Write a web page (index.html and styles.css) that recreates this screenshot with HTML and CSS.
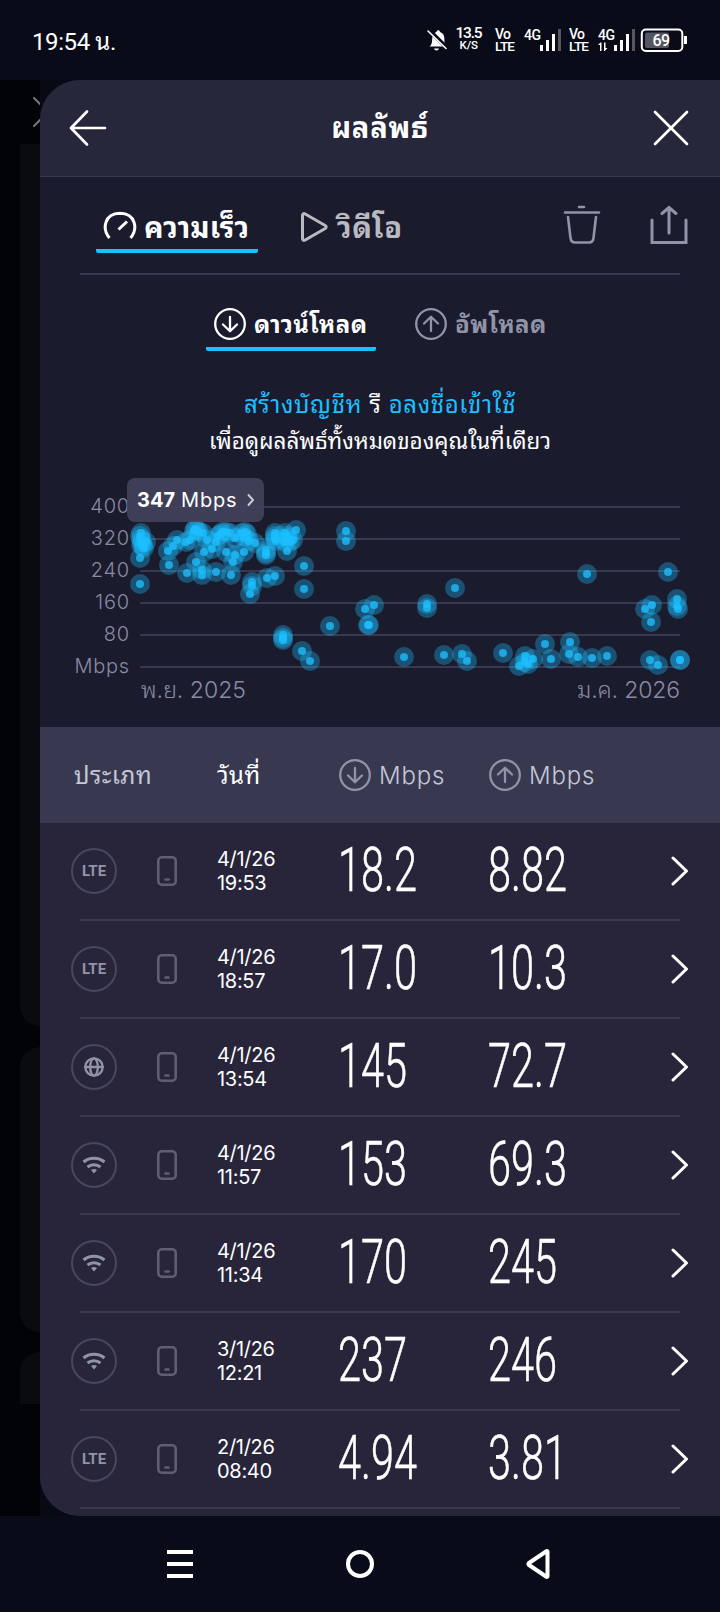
FILE: index.html
```html
<!DOCTYPE html>
<html lang="th">
<head>
    <meta charset="UTF-8">
    <meta name="viewport" content="width=device-width, initial-scale=1.0">
    <title>ผลลัพธ์</title>
    <link rel="stylesheet" href="styles.css">
</head>
<body>
    <svg class="sprite" width="0" height="0">
        <symbol id="down" viewBox="0 0 32 32">
            <circle cx="16" cy="16" r="14.8"/>
            <path d="M16 9v14M9 16.5l7 6.8 7-6.8"/>
        </symbol>
        <symbol id="up" viewBox="0 0 32 32">
            <circle cx="16" cy="16" r="14.8"/>
            <path d="M16 23V9M9 15.5l7-6.8 7 6.8"/>
        </symbol>
        <symbol id="phone" viewBox="0 0 20 30">
            <rect x="1.300" y="1.300" width="17.400" height="27.400" rx="3.5"/>
            <path d="M8.500 23.500h3"/>
        </symbol>
        <symbol id="globe" viewBox="0 0 20 20">
            <circle cx="10" cy="10" r="8.7"/>
            <ellipse cx="10" cy="10" rx="3.8" ry="8.7"/>
            <path d="M1 10h18"/>
        </symbol>
        <symbol id="wifi" viewBox="0 0 24 18">
            <path d="M1.500 6c6-5 15-5 21 0M5.500 11c3.800-3 9.200-3 13 0"/>
            <path class="fill" d="M9 14q3-1.800 6 0l-3 3.500z"/>
        </symbol>
        <symbol id="chevron" viewBox="0 0 18 30">
            <path d="M2 2l13.500 13L2 28"/>
        </symbol>
    </svg>

    <header class="status-bar">
        <span class="clock">19:54 น.</span>
        <svg class="status-icons" width="270" height="30" viewBox="425 25 270 30">
            <path class="white" d="M430.500 46.500c3-2 2.500-6 2.800-9 .3-3 2-4.800 4.200-5.500.3-2.500 3.200-2.500 3.500 0 3 1 4.200 3.300 4.300 6 .2 3.500-.2 6.500 2.200 8.500zM435 48.500h5c-.5 2.500-4.500 2.500-5 0z"/>
            <path class="slash-gap" d="M430 30l18 18"/>
            <path class="slash" d="M429 31l18 17.500"/>
            <text x="456.500" y="38" font-size="15.500" textLength="27">13.5</text>
            <text x="460.500" y="49" font-size="11.500" textLength="18.500">K/S</text>
            <text x="496" y="39" font-size="14" textLength="16">Vo</text>
            <text x="496" y="51" font-size="13.500" textLength="20">LTE</text>
            <text x="525" y="39.500" font-size="14" textLength="17">4G</text>
            <path class="white" d="M541 45h3v6h-3zM547 40h3v11h-3zM553 34h3v17h-3z"/>
            <path class="dim" d="M559 29h3v22h-3z"/>
            <text x="570" y="39" font-size="14" textLength="16">Vo</text>
            <text x="570" y="51" font-size="13.500" textLength="20">LTE</text>
            <text x="599" y="39.500" font-size="14" textLength="17">4G</text>
            <path class="white" d="M599 45l2.500-2.500h1V51H601v-6zM605 42.500h1.500V48h2L605.800 51H605z"/>
            <path class="white" d="M615 45h3v6h-3zM621 40h3v11h-3zM627 34h3v17h-3z"/>
            <path class="dim" d="M633 29h3v22h-3z"/>
            <rect class="battery" x="642.800" y="29.500" width="40.500" height="21.500" rx="4"/>
            <rect class="dim" x="646" y="32.500" width="24" height="15.500" rx="2"/>
            <path class="white" d="M685 36h3v8h-3z"/>
            <text x="653.500" y="45.500" font-size="16" textLength="17.500">69</text>
        </svg>
    </header>

    <div class="screen">
        <aside class="backdrop">
            <svg class="backdrop-close" width="8" height="32" viewBox="0 0 8 32">
                <path d="M2 2l15 15M2 30l15-15"/>
            </svg>
            <div class="ghost ghost-first"></div>
            <div class="ghost ghost-second"></div>
            <div class="ghost ghost-third"></div>
        </aside>

        <main class="drawer">
            <div class="title-bar">
                <svg class="line-icon" width="38" height="38" viewBox="0 0 38 38"><path d="M36 19H2M18 2.500L2 19l16 16.500"/></svg>
                <h1>ผลลัพธ์</h1>
                <svg class="line-icon" width="36" height="36" viewBox="0 0 36 36"><path d="M2 2l32 32M34 2L2 34"/></svg>
            </div>

            <nav class="tabs">
                <a class="tab active">
                    <svg class="gauge" width="34" height="32" viewBox="0 0 34 32"><path d="M6.500 27C-1 18 1 2.500 17 2.200 33 2.500 35 18 27.500 27"/><path class="needle" d="M24 10.500l-8.500 8"/></svg>
                    <span>ความเร็ว</span>
                </a>
                <a class="tab video">
                    <svg width="28" height="32" viewBox="0 0 28 32"><path d="M2.500 4.500c0-1.800 1.200-2.300 2.700-1.500l20 11.500c1.300.8 1.300 2.200 0 3L5.200 29c-1.500.8-2.700.2-2.700-1.500z"/></svg>
                    <span>วิดีโอ</span>
                </a>
                <svg class="tool" width="38" height="40" viewBox="0 0 38 40"><path d="M16 2h5M2 7.500h34M5 12l2.500 21c.4 3 2 4.500 4.500 4.500h14c2.500 0 4.100-1.500 4.500-4.500L33 12"/></svg>
                <svg class="tool share" width="38" height="40" viewBox="0 0 38 40"><path d="M2 15v22.500h34V15M19 28V2.500M12 8.500l7-6 7 6"/></svg>
            </nav>

            <nav class="subtabs">
                <a class="subtab active"><svg class="ring"><use href="#down"/></svg><span>ดาวน์โหลด</span></a>
                <a class="subtab"><svg class="ring"><use href="#up"/></svg><span>อัพโหลด</span></a>
            </nav>

            <div class="signin">
                <p class="signin-links"><a>สร้างบัญชีห</a> รื <a>อลงชื่อเข้าใช้</a></p>
                <p class="signin-note">เพื่อดูผลลัพธ์ทั้งหมดของคุณในที่เดียว</p>
            </div>

            <div class="chart">
                <svg width="680" height="240" viewBox="40 470 680 240">
                    <defs>
                        <marker id="dot" markerUnits="userSpaceOnUse" markerWidth="20" markerHeight="20" refX="10" refY="10">
                            <circle class="halo" cx="10" cy="10" r="10"/>
                            <circle class="core" cx="10" cy="10" r="4"/>
                        </marker>
                    </defs>
                    <path class="grid" d="M140 507h540M140 539h540M140 571h540M140 603h540M140 635h540M140 667h540"/>
                    <g class="axis">
                        <text x="130" y="513">400</text>
                        <text x="130" y="545">320</text>
                        <text x="130" y="577">240</text>
                        <text x="130" y="609">160</text>
                        <text x="130" y="641">80</text>
                        <text x="130" y="673">Mbps</text>
                    </g>
                    <text class="month" x="141" y="698" textLength="105">พ.ย. 2025</text>
                    <text class="month" x="577" y="698" textLength="103">ม.ค. 2026</text>
                    <polyline class="series" points="
                        140,584 140,558 141,533 140,536 141,539 142,542 143,546 146,542 144,548 141,545
                        168,551 169,565 173,546 177,540 186,542 187,573 190,540
                        195,529 197,530 199,532 203,533 207,540 194,531 204,552 212,549 196,562 202,570 202,575 216,572 216,542
                        221,534 222,532 218,536 226,532 230,533 235,538 226,552 235,555 233,562 231,575 244,552
                        242,533 245,532 247,534 244,537 249,541 255,543 252,582 252,586 250,594 267,578 275,576
                        266,550 266,553 266,555 275,533 275,536 275,539 276,541 285,533 287,536 288,538 290,542 293,540 285,542 287,551
                        296,530 304,566 304,589 346,531 346,541 330,626 283,635 283,638 283,640 302,651 310,661
                        365,609 374,605 368,625 369,625 404,657 427,604 427,608 455,588 444,655 462,654 467,661 503,653
                        525,656 533,659 519,666 525,662 528,664 545,644 551,659 570,642 569,654 578,657 592,658 607,656 587,574
                        668,572 645,609 652,605 651,622 677,599 677,606 678,609 650,660 658,665 680,660 680,660"/>
                </svg>
                <div class="tooltip">
                    <b>347</b><span>Mbps</span>
                    <svg width="8" height="14" viewBox="0 0 8 14"><path d="M1.500 2l4.500 5-4.500 5"/></svg>
                </div>
            </div>

            <section class="results">
                <div class="row results-head">
                    <span class="col-type">ประเภท</span>
                    <span class="col-date">วันที่</span>
                    <span class="col-speed"><svg class="ring"><use href="#down"/></svg>Mbps</span>
                    <span class="col-speed"><svg class="ring"><use href="#up"/></svg>Mbps</span>
                </div>
                <div class="row">
                    <span class="badge">LTE</span>
                    <svg class="phone"><use href="#phone"/></svg>
                    <span class="date">4/1/26<br>19:53</span>
                    <span class="value"><b>18.2</b></span>
                    <span class="value"><b>8.82</b></span>
                    <svg class="chevron"><use href="#chevron"/></svg>
                </div>
                <div class="row">
                    <span class="badge">LTE</span>
                    <svg class="phone"><use href="#phone"/></svg>
                    <span class="date">4/1/26<br>18:57</span>
                    <span class="value"><b>17.0</b></span>
                    <span class="value"><b>10.3</b></span>
                    <svg class="chevron"><use href="#chevron"/></svg>
                </div>
                <div class="row">
                    <span class="badge"><svg class="globe"><use href="#globe"/></svg></span>
                    <svg class="phone"><use href="#phone"/></svg>
                    <span class="date">4/1/26<br>13:54</span>
                    <span class="value"><b>145</b></span>
                    <span class="value"><b>72.7</b></span>
                    <svg class="chevron"><use href="#chevron"/></svg>
                </div>
                <div class="row">
                    <span class="badge"><svg class="wifi"><use href="#wifi"/></svg></span>
                    <svg class="phone"><use href="#phone"/></svg>
                    <span class="date">4/1/26<br>11:57</span>
                    <span class="value"><b>153</b></span>
                    <span class="value"><b>69.3</b></span>
                    <svg class="chevron"><use href="#chevron"/></svg>
                </div>
                <div class="row">
                    <span class="badge"><svg class="wifi"><use href="#wifi"/></svg></span>
                    <svg class="phone"><use href="#phone"/></svg>
                    <span class="date">4/1/26<br>11:34</span>
                    <span class="value"><b>170</b></span>
                    <span class="value"><b>245</b></span>
                    <svg class="chevron"><use href="#chevron"/></svg>
                </div>
                <div class="row">
                    <span class="badge"><svg class="wifi"><use href="#wifi"/></svg></span>
                    <svg class="phone"><use href="#phone"/></svg>
                    <span class="date">3/1/26<br>12:21</span>
                    <span class="value"><b>237</b></span>
                    <span class="value"><b>246</b></span>
                    <svg class="chevron"><use href="#chevron"/></svg>
                </div>
                <div class="row">
                    <span class="badge">LTE</span>
                    <svg class="phone"><use href="#phone"/></svg>
                    <span class="date">2/1/26<br>08:40</span>
                    <span class="value"><b>4.94</b></span>
                    <span class="value"><b>3.81</b></span>
                    <svg class="chevron"><use href="#chevron"/></svg>
                </div>
            </section>
        </main>
    </div>

    <footer class="nav-bar">
        <svg width="26" height="28" viewBox="0 0 26 28"><path class="white" d="M0 0h26v4H0zM0 12h26v4H0zM0 24h26v4H0z"/></svg>
        <svg width="28" height="28" viewBox="0 0 28 28"><circle cx="14" cy="14" r="12"/></svg>
        <svg width="24" height="30" viewBox="0 0 24 30"><path d="M21.500 2.500v25q-.5.800-1.500 0L3 16q-1-1 0-2L20 2.500q1-.800 1.500 0z"/></svg>
    </footer>
</body>
</html>
```

FILE: styles.css
```css
:root {
    --bar: #090b19;
    --panel: #1b1b2e;
    --header: #26273a;
    --list: #28253b;
    --line: #383950;
    --muted: #9193a8;
    --accent: #1cbfff;
}

* {
    margin: 0;
    padding: 0;
    box-sizing: border-box;
}

body {
    width: 720px;
    height: 1612px;
    overflow: hidden;
    background: var(--bar);
    color: #fff;
    font-family: Inter, "Noto Sans Thai Looped", "Droid Sans Thai", Loma, "Noto Sans Thai", "Noto Sans", sans-serif;
}

svg {
    display: block;
    flex: none;
    fill: none;
    stroke: currentColor;
    stroke-linecap: round;
    stroke-linejoin: round;
}

.sprite {
    position: absolute;
}

.white {
    fill: #fff;
    stroke: none;
}

.dim {
    fill: #55565f;
    stroke: none;
}

/* status bar */
.status-bar {
    height: 80px;
    padding: 0 26px 0 32px;
    display: flex;
    align-items: center;
    justify-content: space-between;
    font-family: Roboto, "Noto Sans Thai Looped", "Droid Sans Thai", Loma, sans-serif;
}

.clock {
    margin-top: -3px;
    font-size: 24px;
    letter-spacing: -0.4px;
}

.status-icons text {
    fill: #fff;
    stroke: none;
    font-weight: 500;
}

.slash-gap {
    stroke: var(--bar);
    stroke-width: 4;
}

.slash {
    stroke-width: 1.6;
}

.battery {
    stroke-width: 2;
}

/* page behind the drawer */
.screen {
    height: 1436px;
    display: flex;
    background: #070914;
}

.backdrop {
    width: 40px;
    padding: 16px 0 0 20px;
    overflow: hidden;
    background: #020307;
}

.backdrop-close {
    margin-left: 12px;
    color: #77777a;
    stroke-width: 2;
}

.ghost {
    background: #0a0b11;
}

.ghost-first {
    height: 882px;
    margin-top: 16px;
    border-radius: 0 0 0 20px;
}

.ghost-second {
    height: 285px;
    margin-top: 21px;
    border-radius: 20px 0 0 20px;
}

.ghost-third {
    height: 52px;
    margin-top: 20px;
    border-radius: 20px 0 0 0;
}

/* drawer */
.drawer {
    width: 680px;
    overflow: hidden;
    border-radius: 40px 0 0 40px;
    background: var(--panel);
}

.title-bar {
    height: 97px;
    padding: 0 31px 0 29px;
    display: flex;
    align-items: center;
    justify-content: space-between;
    background: var(--header);
    border-bottom: 1px solid var(--line);
}

.title-bar h1 {
    margin-top: -1px;
    font-size: 29px;
    line-height: 40px;
    letter-spacing: 0.800px;
}

.line-icon {
    stroke-width: 2.700;
}

.tabs {
    height: 98px;
    margin: 0 40px;
    padding: 20px 0 0 16px;
    display: flex;
    align-items: flex-start;
    border-bottom: 2px solid var(--line);
}

.tab,
.subtab {
    display: flex;
    align-items: center;
    font-weight: 700;
    white-space: nowrap;
}

.tab span,
.subtab span {
    margin-top: -4px;
}

.tab {
    height: 56px;
    padding-top: 7px;
    font-size: 29px;
    letter-spacing: 0.100px;
    color: #b9babf;
}

.tab svg {
    stroke-width: 3;
}

.tab.active {
    width: 162px;
    padding-left: 7px;
    color: #fff;
    border-bottom: 4px solid var(--accent);
    border-radius: 2px;
}

.tab.active svg {
    margin-right: 7px;
    stroke-width: 3;
    stroke-linecap: butt;
}

.tab.video {
    height: 52px;
    width: 106px;
    margin-left: 42px;
    letter-spacing: 0.600px;
}

.tab.video svg {
    margin-right: 9px;
}

.tool {
    margin: 8px 0 0 157px;
    color: var(--muted);
    stroke-width: 2.600;
}

.tool.share {
    margin: 8px -8px 0 auto;
    stroke-width: 3;
    stroke-linejoin: miter;
}

.subtabs {
    height: 106px;
    padding: 20px 0 0 166px;
    display: flex;
    gap: 31px;
}

.subtab {
    height: 56px;
    padding: 5px 8px 4px;
    font-size: 24px;
    letter-spacing: 0.500px;
    color: var(--muted);
}

.subtab.active {
    width: 170px;
    padding-bottom: 0;
    color: #fff;
    border-bottom: 4px solid var(--accent);
    border-radius: 2px;
}

.ring {
    width: 32px;
    height: 32px;
    margin-right: 8px;
    stroke-width: 2.300;
}

.signin {
    height: 89px;
    padding-top: 6px;
    text-align: center;
    font-size: 24px;
    line-height: 36px;
    white-space: nowrap;
}

.signin-links {
    letter-spacing: 0.600px;
}

.signin-note {
    font-size: 22.4px;
}

.signin a {
    color: var(--accent);
}

.chart {
    position: relative;
    height: 257px;
}

.grid {
    stroke: var(--line);
    stroke-width: 2;
    stroke-linecap: butt;
}

.axis text,
.month {
    fill: #8a8ba2;
    stroke: none;
    font-weight: 300;
}

.axis text {
    font-size: 20px;
    text-anchor: end;
    letter-spacing: 0.800px;
}

.month {
    font-size: 23px;
}

.series {
    stroke: none;
    marker: url(#dot);
}

.halo {
    fill: rgba(28, 191, 255, 0.33);
    stroke: none;
}

.core {
    fill: rgba(28, 191, 255, 0.78);
    stroke: none;
}

.tooltip {
    position: absolute;
    left: 87px;
    top: 8px;
    width: 137px;
    height: 44px;
    padding: 0 9px 0 10px;
    display: flex;
    align-items: center;
    gap: 6px;
    border-radius: 8px;
    background: rgba(67, 67, 92, 0.9);
    font-size: 20px;
}

.tooltip span {
    letter-spacing: 0.800px;
}

.tooltip svg {
    margin-left: auto;
    color: #c8c9d4;
    stroke-width: 2;
}

/* results list */
.results {
    height: 789px;
    overflow: hidden;
    background: var(--list);
}

.row {
    height: 98px;
    margin: 0 40px;
    display: flex;
    align-items: center;
    border-bottom: 2px solid var(--line);
}

.results-head {
    height: 96px;
    margin: 0;
    padding-left: 34px;
    border: 0;
    background: #383950;
    color: #c5c7d8;
    font-size: 24px;
}

.col-type {
    width: 143px;
    margin-top: -4px;
    letter-spacing: 0.500px;
}

.col-date {
    width: 122px;
    margin-top: -4px;
    letter-spacing: 0.500px;
    color: #fff;
}

.col-speed {
    width: 150px;
    display: flex;
    align-items: center;
    font-weight: 300;
    letter-spacing: 0.800px;
}

.col-speed .ring {
    color: var(--muted);
}

.badge {
    flex: none;
    width: 46px;
    height: 46px;
    margin-left: -9px;
    display: flex;
    align-items: center;
    justify-content: center;
    border: 2px solid #454860;
    border-radius: 50%;
    color: var(--muted);
    font: 700 15px Roboto, sans-serif;
}

.globe {
    width: 20px;
    height: 20px;
    stroke-width: 2.300;
}

.wifi {
    width: 24px;
    height: 18px;
    stroke-width: 3;
    stroke-linecap: butt;
}

.fill {
    fill: currentColor;
    stroke: none;
}

.phone {
    width: 20px;
    height: 30px;
    margin-left: 40px;
    color: #5f5e74;
    stroke-width: 2.600;
}

.date {
    width: 123px;
    margin-left: 40px;
    font-size: 20px;
    line-height: 24px;
    letter-spacing: -0.300px;
}

.value {
    width: 150px;
    padding-bottom: 3px;
}

.value b {
    display: inline-block;
    margin-left: -2px;
    font: 300 61px/70px Roboto, sans-serif;
    -webkit-text-stroke: 0.6px #fff;
    transform: scaleX(0.68);
    transform-origin: left;
}

.chevron {
    flex: none;
    width: 18px;
    height: 30px;
    margin: 0 -9px 0 auto;
    stroke-width: 3;
}

/* system navigation */
.nav-bar {
    height: 96px;
    padding: 0 170px 0 167px;
    display: flex;
    align-items: center;
    justify-content: space-between;
}

.nav-bar svg {
    stroke-width: 4;
}
```
